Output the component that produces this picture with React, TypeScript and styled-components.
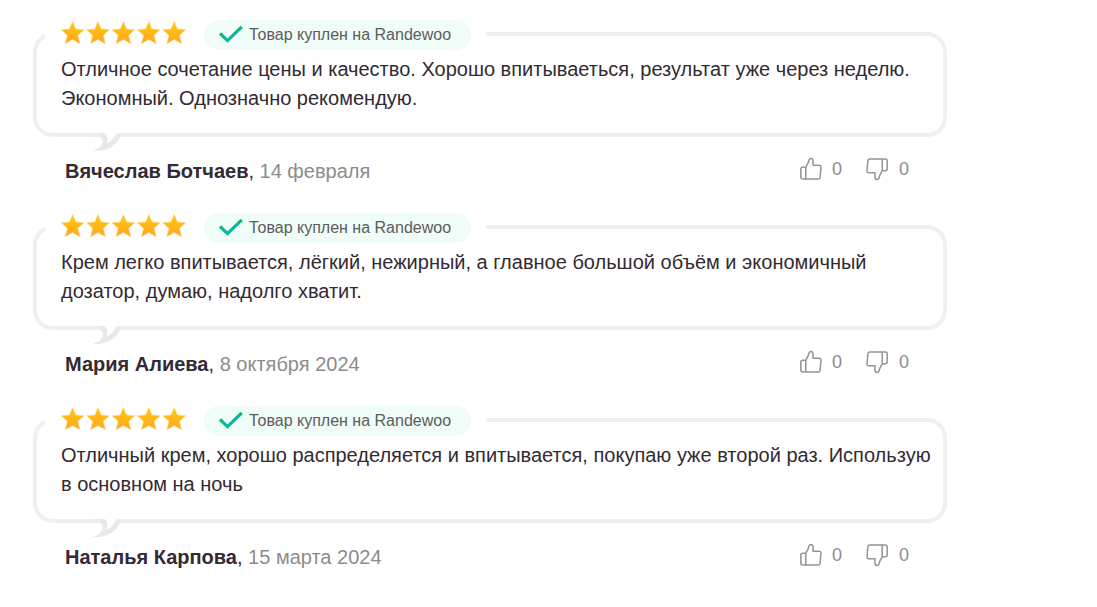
import React from "react";
import styled, { createGlobalStyle } from "styled-components";

const Global = createGlobalStyle`
  * { box-sizing: border-box; }
  body {
    margin: 0;
    background: #fff;
    color: #332a33;
    font-family: "Liberation Sans", Arial, sans-serif;
    font-size: 20px;
  }
`;

const Reviews = styled.main`
  display: flex;
  flex-direction: column;
  gap: 42px;
  padding: 32px 150px 20px 33px;
`;

const Review = styled.article`
  display: flex;
  flex-direction: column;
`;

const Bubble = styled.div`
  position: relative;
  padding: 0 8px 20px 24px;
  border: 4px solid #f0f0f0;
  border-radius: 20px;
`;

const Header = styled.header`
  display: flex;
  align-items: center;
  gap: 18px;
  width: max-content;
  margin: -16px 0 5px -16px;
  padding: 0 15px 0 16px;
  background: #fff;
`;

const Stars = styled.svg`
  display: block;
  width: 125px;
  height: 24px;
  margin-bottom: 4px;
`;

const Badge = styled.span`
  display: flex;
  align-items: center;
  gap: 6px;
  height: 30px;
  padding: 0 20px 0 15px;
  border-radius: 15px;
  background: #effcf8;
  color: #5c5c5c;
  font-size: 16px;
`;

const Text = styled.p`
  margin: 0;
  line-height: 29px;
`;

const Tail = styled.svg`
  position: absolute;
  top: 100%;
  left: 55px;
  width: 30px;
  height: 18px;
`;

const Footer = styled.footer`
  display: flex;
  justify-content: space-between;
  align-items: flex-start;
  padding: 18px 38px 0 32px;
`;

const Author = styled.p`
  margin: 4px 0 0;
  line-height: 24px;
  color: #8c8c8c;
`;

const Name = styled.b`
  color: #332a33;
`;

const Comma = styled.span`
  color: #332a33;
`;

const Votes = styled.div`
  display: flex;
  gap: 24px;
`;

const Vote = styled.button`
  display: flex;
  align-items: center;
  gap: 10px;
  height: 28px;
  padding: 0;
  border: 0;
  background: none;
  color: #8c8c8c;
  font: 18px "Liberation Sans", Arial, sans-serif;
  cursor: pointer;
`;

const ThumbSvg = styled.svg<{ $down?: boolean }>`
  display: block;
  width: 23px;
  height: 24px;
  transform: ${(p) => (p.$down ? "rotate(180deg)" : "none")};
`;

const Thumb = ({ down }: { down?: boolean }) => (
  <ThumbSvg $down={down} viewBox="0 0 23 24" fill="none" stroke="#949494" strokeWidth="1.5" strokeLinejoin="round" aria-hidden="true">
    <path d="M6.8 10.2H3.8Q1.8 10.2 1.8 12.2V20Q1.8 22 3.8 22H19.2Q20.9 22 21.1 20.4L22 10Q22.1 8.2 20.3 8.2H14V4.2Q14 1.4 12 1.4Q10.5 1.4 10 3L9 6.2L6.8 10.2V22" />
  </ThumbSvg>
);

const Rating = ({ id }: { id: string }) => (
  <Stars viewBox="0 0 125 24" role="img" aria-label="5 из 5">
    <defs>
      <linearGradient id={id} x1="0" y1="0" x2="0" y2="1">
        <stop offset="0" stopColor="#ffc90b" />
        <stop offset="1" stopColor="#ffa623" />
      </linearGradient>
    </defs>
    {[0, 25.4, 50.8, 76.2, 101.6].map((x) => (
      <path
        key={x}
        transform={`translate(${x} 0)`}
        fill={`url(#${id})`}
        stroke="#ffd98a"
        strokeWidth=".6"
        d="M11.6 .4L14.8 8L23 8.7L16.9 14.3L19 22.8L11.6 18.6L4.2 22.8L6.3 14.3L.2 8.7L8.4 8Z"
      />
    ))}
  </Stars>
);

const reviews = [
  {
    name: "Вячеслав Ботчаев",
    date: "14 февраля",
    text: "Отличное сочетание цены и качество. Хорошо впитываеться, результат уже через неделю. Экономный. Однозначно рекомендую.",
  },
  {
    name: "Мария Алиева",
    date: "8 октября 2024",
    text: "Крем легко впитывается, лёгкий, нежирный, а главное большой объём и экономичный дозатор, думаю, надолго хватит.",
  },
  {
    name: "Наталья Карпова",
    date: "15 марта 2024",
    text: "Отличный крем, хорошо распределяется и впитывается, покупаю уже второй раз. Использую в основном на ночь",
  },
];

export default function App() {
  return (
    <>
      <Global />
      <Reviews>
        {reviews.map((r, i) => (
          <Review key={r.name}>
            <Bubble>
              <Header>
                <Rating id={`star-${i}`} />
                <Badge>
                  <svg width="24" height="18" viewBox="0 0 24 18" fill="none" stroke="#09b797" strokeWidth="3.2" aria-hidden="true">
                    <path d="M1 7.5L8.5 14.6L22.8 .8" />
                  </svg>
                  Товар куплен на Randewoo
                </Badge>
              </Header>
              <Text>{r.text}</Text>
              <Tail viewBox="0 0 30 18" aria-hidden="true">
                <path fill="#fff" d="M12 0H27V4H12Z" />
                <path fill="#ececf8" d="M0 0H8V4H0Z" />
                <path fill="#e8e8e9" d="M8 0H12.5Q15.5 2 15.5 6Q15.5 8.5 14 10.5Q20 9 23 2.5L25 .5H29.5Q24 16 7 18H1Q8.5 15 10.5 10.5Q12 6 8 4Z" />
              </Tail>
            </Bubble>
            <Footer>
              <Author>
                <Name>{r.name}</Name>
                <Comma>,</Comma> {r.date}
              </Author>
              <Votes>
                <Vote type="button" aria-label="Нравится: 0">
                  <Thumb />0
                </Vote>
                <Vote type="button" aria-label="Не нравится: 0">
                  <Thumb down />0
                </Vote>
              </Votes>
            </Footer>
          </Review>
        ))}
      </Reviews>
    </>
  );
}
